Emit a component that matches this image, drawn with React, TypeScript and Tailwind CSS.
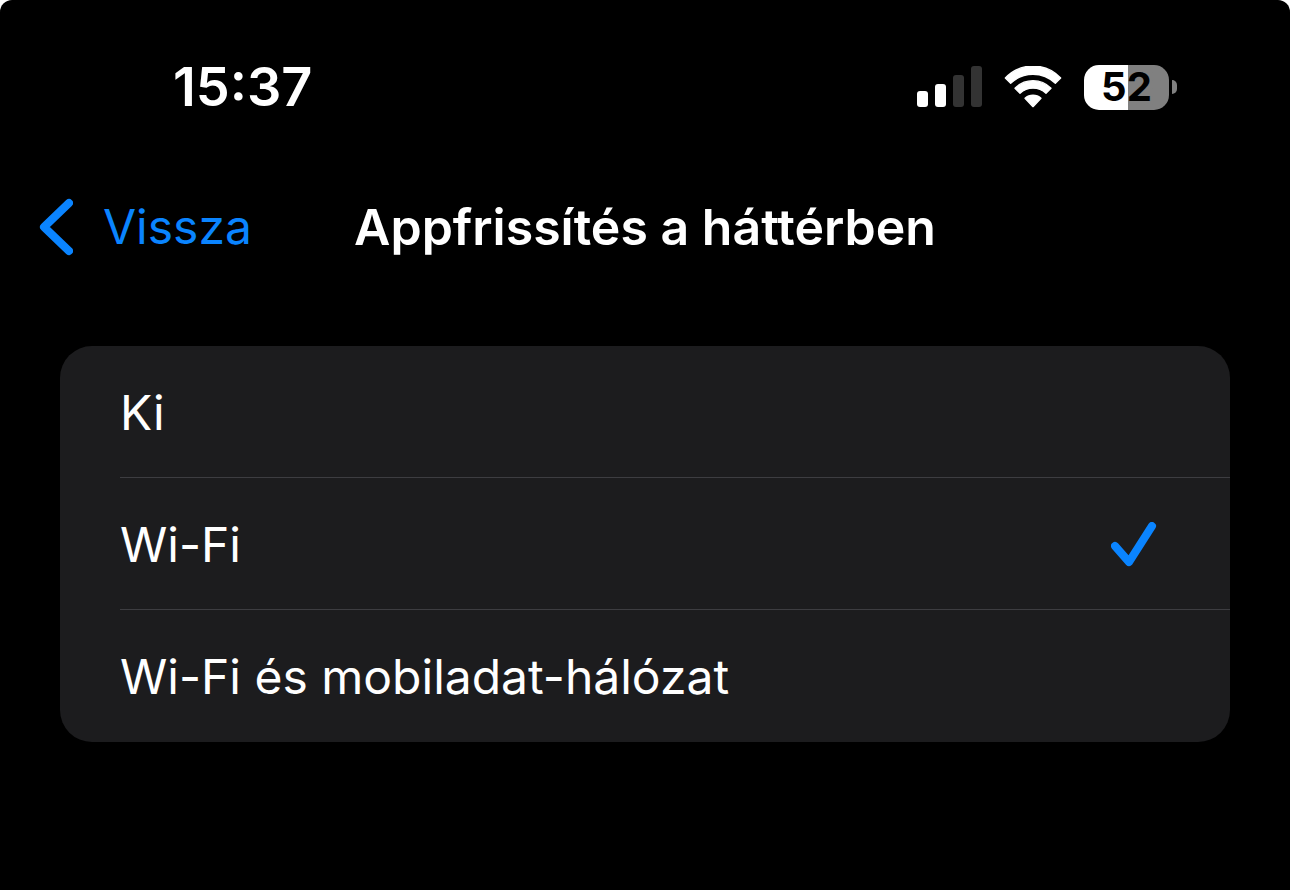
import { useState } from "react";

const OPTIONS = [
  { id: "off", label: "Ki" },
  { id: "wifi", label: "Wi-Fi" },
  { id: "wifi-cellular", label: "Wi-Fi és mobiladat-hálózat" },
];

const SignalIcon = () => (
  <svg className="h-[43px] w-[65px]" viewBox="0 0 65 43" aria-hidden="true">
    <rect x="0" y="25" width="11" height="16" rx="3" fill="#fff" />
    <rect x="18" y="18" width="11" height="23" rx="3" fill="#fff" />
    <rect x="36" y="9" width="11" height="32" rx="3" fill="#333" />
    <rect x="54" y="0" width="11" height="41" rx="3" fill="#333" />
  </svg>
);

const WifiIcon = () => (
  <svg
    className="h-[43px] w-[58px]"
    viewBox="0 0 174 129"
    fill="#fff"
    stroke="#fff"
    strokeWidth="4"
    strokeLinejoin="round"
    aria-hidden="true"
  >
    <path d="M4 36A114 114 0 0 1 170 36L154 52A96 96 0 0 0 20 52Z" />
    <path d="M33 67A75 75 0 0 1 141 67L126 82A57 57 0 0 0 48 82Z" />
    <path d="M63 97A36 36 0 0 1 111 97L87 122Z" />
  </svg>
);

const Battery = () => (
  <div className="flex items-center gap-[3px]">
    <div className="flex h-[45px] w-[85px] items-center justify-center rounded-[15px] bg-linear-to-r from-white from-52% to-[#808080] to-52% text-[40px] leading-none font-bold text-black">
      52
    </div>
    <div className="h-[14px] w-[5px] rounded-r-full bg-[#808080]" />
  </div>
);

const StatusBar = () => (
  <div className="flex h-[174px] items-center justify-between pr-[113px] pl-[173px]">
    <time className="text-[54px] leading-none font-semibold">15:37</time>
    <div className="flex items-center gap-[22px]">
      <SignalIcon />
      <WifiIcon />
      <Battery />
    </div>
  </div>
);

const NavBar = () => (
  <header className="grid h-[106px] grid-cols-[1fr_auto_1fr] items-center px-[39px]">
    <button type="button" className="flex items-center gap-[30px] text-5xl leading-none text-[#0a84ff]">
      <svg
        className="h-[58px] w-[34px]"
        viewBox="0 0 34 58"
        fill="none"
        stroke="currentColor"
        strokeWidth="8"
        strokeLinecap="round"
        strokeLinejoin="round"
        aria-hidden="true"
      >
        <path d="M30 5L5 29L30 53" />
      </svg>
      Vissza
    </button>
    <h1 id="title" className="text-[50px] leading-none font-semibold">
      Appfrissítés a háttérben
    </h1>
  </header>
);

const CheckIcon = () => (
  <svg
    className="h-[46px] w-[46px]"
    viewBox="0 0 46 46"
    fill="none"
    stroke="#0a84ff"
    strokeWidth="8"
    strokeLinecap="round"
    strokeLinejoin="round"
    aria-hidden="true"
  >
    <path d="M4 24L18 40L41 4" />
  </svg>
);

const App = () => {
  const [selected, setSelected] = useState("wifi");

  return (
    <div className="bg-white">
      <div className="min-h-screen rounded-t-xl bg-black font-['Inter',sans-serif] text-white">
        <StatusBar />
        <NavBar />

        <main className="px-[60px] pt-[66px]">
          <div role="radiogroup" aria-labelledby="title" className="rounded-[32px] bg-[#1c1c1e] pl-[60px]">
            {OPTIONS.map(({ id, label }) => (
              <label
                key={id}
                htmlFor={id}
                className="relative flex h-[132px] cursor-pointer items-center justify-between border-b border-[#3d3d41] pt-[2px] pr-[73px] text-5xl leading-none last:border-b-0"
              >
                <input
                  type="radio"
                  id={id}
                  name="refresh"
                  className="absolute inset-0 cursor-pointer appearance-none"
                  checked={selected === id}
                  onChange={() => setSelected(id)}
                />
                {label}
                {selected === id && <CheckIcon />}
              </label>
            ))}
          </div>
        </main>
      </div>
    </div>
  );
};

export default App;
